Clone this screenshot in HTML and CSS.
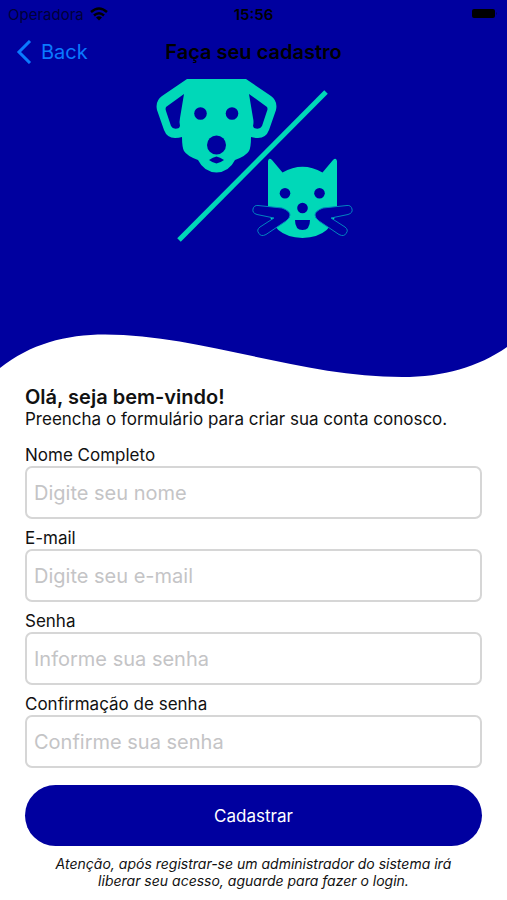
FILE: index.html
```
<!DOCTYPE html>
<html lang="pt-br">
<head>
<meta charset="UTF-8" />
<meta name="viewport" content="width=device-width, initial-scale=1" />
<title>Faça seu cadastro</title>
<link rel="stylesheet" href="styles.css">
</head>
<body>
  <header class="hero">
    <div class="status-bar">
      <div class="carrier">
        <span>Operadora</span>
        <svg width="18" height="14" viewBox="0 0 18 14" fill="none" stroke="currentColor" stroke-width="2.500">
          <path d="M1 5 Q9 -2 17 5" />
          <path d="M4 8.500 Q9 4 14 8.500" />
          <path d="M9 13.500 L6 10.500 Q9 8 12 10.500 Z" fill="currentColor" stroke="none" />
        </svg>
      </div>
      <span class="clock">15:56</span>
      <div class="battery">
        <svg width="28" height="12" viewBox="0 0 28 12" fill="currentColor">
          <rect x="1" y="1" width="23" height="9" rx="2" />
          <path d="M25 4 Q27 5.500 25 7 Z" opacity="0.4" />
        </svg>
      </div>
    </div>
    <nav class="nav-bar">
      <a href="#" class="back-link">
        <svg width="16" height="24" viewBox="0 0 16 24" fill="none" stroke="currentColor" stroke-width="3">
          <path d="M14 1 L3 12 L14 23" />
        </svg>
        Back
      </a>
      <h1>Faça seu cadastro</h1>
    </nav>
    <svg class="logo" width="211" height="168" viewBox="0 0 211 168">
      <!-- cachorro -->
      <path class="logo-shape" d="M39 3 H98 L123 20 Q130 25 128 34 L121 54 Q118 62 110 62 Q106 62 103 61 Q103 71 101 75 Q98 80 87 84 Q81 96 68.500 96.500 Q56 96 50 84 Q39 80 36 75 Q34 71 34 61 Q31 62 27 62 Q19 62 16 54 L9 34 Q7 25 14 20 Z" />
      <path class="logo-hole" d="M36 18 L18 31 Q17 33 18 35 L23 50 Q25 54 31 52 L32 50 Q31 46 32 42 Z" />
      <path class="logo-hole" d="M101 18 L119 31 Q120 33 119 35 L114 50 Q112 54 106 52 L105 50 Q106 46 105 42 Z" />
      <circle class="logo-hole" cx="52.500" cy="37.500" r="6.300" />
      <circle class="logo-hole" cx="84" cy="37.500" r="6.300" />
      <circle class="logo-hole" cx="68.500" cy="69" r="9.500" />
      <path class="logo-hole" d="M61 84 Q65 81 68.500 80.500 Q72 81 76 84 Q72 87 68.500 87.500 Q65 87 61 84 Z" />
      <path class="logo-line" d="M31 164 L178 16" />
      <!-- gato -->
      <path class="logo-shape" d="M120 85 Q121 81 124 84 L134.500 96.500 Q154.500 85 174.500 96.500 L185 84 Q188 81 189 85 V131 Q186 161 154.500 162 Q123 161 120 131 Z" />
      <circle class="logo-hole" cx="137" cy="117.300" r="5.300" />
      <circle class="logo-hole" cx="171.500" cy="117.300" r="5.300" />
      <circle class="logo-hole" cx="154.500" cy="132" r="5.300" />
      <path class="logo-hole" d="M147 144 H162 Q162 154 154.500 154 Q147 154 147 144 Z" />
      <path class="whisker" d="M110 129.500 L134 132 Q142 135 142 139 Q142 142 138 145 L118 158.500 Q113 161 111 157.500 Q108 154 112 151 L126 142 L109 138.500 Q104 137 105 133 Q106 129 110 129.500 Z" />
      <path class="whisker" transform="translate(309 0) scale(-1 1)" d="M110 129.500 L134 132 Q142 135 142 139 Q142 142 138 145 L118 158.500 Q113 161 111 157.500 Q108 154 112 151 L126 142 L109 138.500 Q104 137 105 133 Q106 129 110 129.500 Z" />
    </svg>
  </header>
  <svg class="wave" viewBox="0 0 507 48" preserveAspectRatio="none">
    <path d="M0 0 V38 C30 14 66 4.500 105 4.500 C200 4.500 300 47 402 47 C444 47 478 37 507 17 V0 Z" />
  </svg>

  <main class="signup">
    <h2>Olá, seja bem-vindo!</h2>
    <p class="intro">Preencha o formulário para criar sua conta conosco.</p>
    <form id="signup-form" novalidate>
      <div class="input-group">
        <label for="name">Nome Completo</label>
        <input type="text" id="name" name="name" placeholder="Digite seu nome" required autocomplete="name" />
      </div>
      <div class="input-group">
        <label for="email">E-mail</label>
        <input type="email" id="email" name="email" placeholder="Digite seu e-mail" required autocomplete="email" />
      </div>
      <div class="input-group">
        <label for="password">Senha</label>
        <input type="password" id="password" name="password" placeholder="Informe sua senha" required autocomplete="new-password" />
      </div>
      <div class="input-group">
        <label for="confirm">Confirmação de senha</label>
        <input type="password" id="confirm" name="confirm" placeholder="Confirme sua senha" required autocomplete="new-password" />
      </div>
      <button type="submit" class="signup-btn">Cadastrar</button>
    </form>
    <p class="notice">Atenção, após registrar-se um administrador do sistema irá liberar seu acesso, aguarde para fazer o login.</p>
  </main>
</body>
</html>
```
FILE: styles.css
```
* {
  box-sizing: border-box;
}
body {
  margin: 0;
  background: #fff;
  color: #111;
  font-family: Inter, 'Liberation Sans', Arial, sans-serif;
}
.hero {
  background: #00009f;
  padding-bottom: 86px;
}
.status-bar {
  display: grid;
  grid-template-columns: 1fr auto 1fr;
  align-items: center;
  height: 28px;
  padding: 0 8px;
  color: #000;
  font-size: 15px;
}
.carrier {
  display: flex;
  align-items: center;
  gap: 6px;
  color: #000038;
}
.carrier svg {
  color: #000;
}
.clock {
  font-weight: 600;
}
.battery {
  display: flex;
  justify-content: flex-end;
}
.nav-bar {
  display: grid;
  grid-template-columns: 1fr auto 1fr;
  align-items: center;
  height: 48px;
  padding: 0 16px;
}
.back-link {
  display: flex;
  align-items: center;
  gap: 9px;
  color: #0a7aff;
  font-size: 20px;
  text-decoration: none;
}
.nav-bar h1 {
  margin: 0;
  color: #000;
  font-size: 20px;
  font-weight: 600;
}
.logo {
  display: block;
  margin: 0 auto;
}
.logo-shape {
  fill: #00d8b8;
}
.logo-hole {
  fill: #00009f;
}
.logo-line {
  stroke: #00d8b8;
  stroke-width: 5;
}
.whisker {
  fill: #00009f;
  stroke: #0084c0;
  stroke-width: 1;
}
.wave {
  display: block;
  width: 100%;
  height: 48px;
  fill: #00009f;
}
.signup {
  padding: 8px 25px 10px;
}
.signup h2 {
  margin: 0;
  font-size: 20px;
  font-weight: 600;
  line-height: 22px;
}
.intro {
  margin: 0 0 14px;
  font-size: 17px;
  line-height: 22px;
}
.signup form {
  display: flex;
  flex-direction: column;
  gap: 8px;
}
.input-group {
  display: flex;
  flex-direction: column;
}
.input-group label {
  font-size: 17px;
  line-height: 22px;
}
.input-group input {
  width: 100%;
  height: 53px;
  padding: 0 7px;
  border: 2px solid #d6d6d6;
  border-radius: 7px;
  background: #fff;
  color: #111;
  font-family: inherit;
  font-size: 20px;
  outline: none;
}
.input-group input::placeholder {
  color: #c4c4c6;
  opacity: 1;
}
.input-group input:focus {
  border-color: #00009f;
}
.signup-btn {
  height: 61px;
  margin-top: 9px;
  border: none;
  border-radius: 31px;
  background: #00009f;
  color: #fff;
  font-family: inherit;
  font-size: 17px;
  cursor: pointer;
}
.notice {
  margin: 9px 20px 0;
  font-size: 14px;
  font-style: italic;
  line-height: 17px;
  text-align: center;
}
```
